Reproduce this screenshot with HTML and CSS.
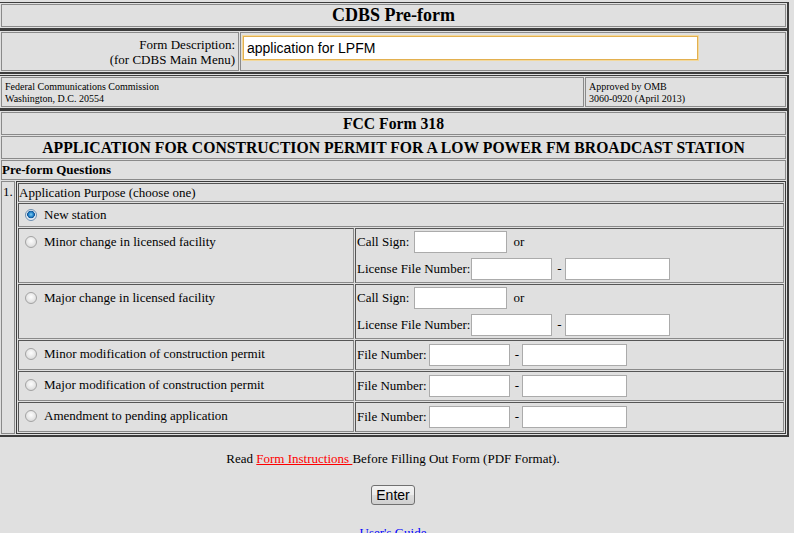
FILE: index.html
```html
<!DOCTYPE html>
<html lang="en">

<head>
  <meta charset="UTF-8">
  <title>CDBS Pre-form</title>
  <link rel="stylesheet" href="styles.css">
</head>

<body>
  <table class="box">
    <tr>
      <td class="title">CDBS Pre-form</td>
    </tr>
  </table>

  <table class="box">
    <tr>
      <td class="desc-label">Form Description:<br>(for CDBS Main Menu)</td>
      <td class="desc-field"><input class="desc-input" type="text" value="application for LPFM"></td>
    </tr>
  </table>

  <table class="box agency">
    <tr>
      <td>Federal Communications Commission<br>Washington, D.C. 20554</td>
      <td class="omb">Approved by OMB<br>3060-0920 (April 2013)</td>
    </tr>
  </table>

  <table class="box">
    <tr>
      <td colspan="2" class="head">FCC Form 318</td>
    </tr>
    <tr>
      <td colspan="2" class="head">APPLICATION FOR CONSTRUCTION PERMIT FOR A LOW POWER FM BROADCAST STATION</td>
    </tr>
    <tr>
      <td colspan="2" class="section">Pre-form Questions</td>
    </tr>
    <tr>
      <td class="num">1.</td>
      <td class="nest">
        <table class="inner">
          <tr>
            <td colspan="2" class="purpose">Application Purpose (choose one)</td>
          </tr>
          <tr>
            <td colspan="2" class="opt single"><label><input type="radio" name="purpose" checked> New station</label></td>
          </tr>
          <tr>
            <td class="opt"><label><input type="radio" name="purpose"> Minor change in licensed facility</label></td>
            <td class="fields">
              <div class="line">Call Sign:<input class="txt call" type="text"><span class="or">or</span></div>
              <div class="line">License File Number:<input class="txt fn1" type="text"><span class="dash">-</span><input class="txt fn2" type="text"></div>
            </td>
          </tr>
          <tr>
            <td class="opt"><label><input type="radio" name="purpose"> Major change in licensed facility</label></td>
            <td class="fields">
              <div class="line">Call Sign:<input class="txt call" type="text"><span class="or">or</span></div>
              <div class="line">License File Number:<input class="txt fn1" type="text"><span class="dash">-</span><input class="txt fn2" type="text"></div>
            </td>
          </tr>
          <tr>
            <td class="opt"><label><input type="radio" name="purpose"> Minor modification of construction permit</label></td>
            <td class="fields one">
              <div class="line">File Number:<input class="txt fn1 file" type="text"><span class="dash">-</span><input class="txt fn2" type="text"></div>
            </td>
          </tr>
          <tr>
            <td class="opt"><label><input type="radio" name="purpose"> Major modification of construction permit</label></td>
            <td class="fields one">
              <div class="line">File Number:<input class="txt fn1 file" type="text"><span class="dash">-</span><input class="txt fn2" type="text"></div>
            </td>
          </tr>
          <tr>
            <td class="opt"><label><input type="radio" name="purpose"> Amendment to pending application</label></td>
            <td class="fields one">
              <div class="line">File Number:<input class="txt fn1 file" type="text"><span class="dash">-</span><input class="txt fn2" type="text"></div>
            </td>
          </tr>
        </table>
      </td>
    </tr>
  </table>

  <div class="footer">
    <p class="read">Read <a class="instr" href="#">Form Instructions </a>Before Filling Out Form (PDF Format).</p>
    <p class="btn-row"><button class="enter" type="button">Enter</button></p>
    <p class="guide-row"><a class="guide" href="#">User's Guide</a></p>
  </div>
</body>

</html>
```

FILE: styles.css
```css
* {
  box-sizing: border-box;
}

body {
  margin: 0;
  padding-top: 2px;
  background-color: #e0e0e0;
  color: #000;
  font-family: "Liberation Serif", "Times New Roman", serif;
  font-size: 13px;
}

/* Boxed tables */
.box {
  width: 790px;
  margin-left: -1px;
  border: 1px solid #3c3c3c;
  border-right-width: 2px;
  border-bottom-width: 2px;
  border-spacing: 1px;
}

.box td {
  border: 1px solid #8a8a8a;
  padding: 0 2px;
}

.title {
  text-align: center;
  font-size: 18px;
  font-weight: bold;
  height: 23px;
}

.desc-label {
  width: 238px;
  text-align: right;
  line-height: 15px;
  padding: 4px 3px 3px 2px !important;
}

.desc-field {
  vertical-align: top;
  padding: 3px 4px 0 2px !important;
}

.desc-input {
  width: 455px;
  height: 24px;
  border: 1px solid #e3b04f;
  box-shadow: 0 0 0 1px #f2d89c;
  padding: 2px 3px;
  font-family: "Liberation Sans", Arial, sans-serif;
  font-size: 14px;
  outline: none;
}

.agency {
  margin-top: 1px;
}

.agency td {
  font-size: 10px;
  line-height: 12px;
  padding: 3px 3px 1px 3px;
}

.agency .omb {
  width: 201px;
}

.head {
  text-align: center;
  font-size: 15.7px;
  font-weight: bold;
  height: 23px;
}

.box .section {
  font-weight: bold;
  height: 20px;
  padding-left: 0;
}

.box .num {
  width: 14px;
  vertical-align: top;
  padding: 2px 0 2px 1px;
}

.box .nest {
  padding: 0;
  border: none;
}

/* Nested question table */
.inner {
  width: 100%;
  border: 1px solid #3c3c3c;
  border-spacing: 1px;
}

.inner td {
  border: 1px solid #555;
  border-right-color: #8a8a8a;
  border-bottom-color: #8a8a8a;
}

.box .purpose {
  height: 19px;
  padding-left: 0;
}

.opt {
  width: 336px;
  vertical-align: top;
  padding: 5px 3px !important;
}

.opt.single {
  padding: 3px 3px !important;
  height: 23px;
  vertical-align: middle;
}

.opt label {
  display: flex;
  align-items: center;
  gap: 7px;
}

.opt input[type="radio"] {
  appearance: none;
  width: 12px;
  height: 12px;
  margin: 0 0 0 3px;
  border-radius: 50%;
  border: 1px solid #a3a3a3;
  background: radial-gradient(circle at 50% 40%, #fdfdfd 0, #e6e6e6 55%, #cfcfcf 100%);
}

.opt input[type="radio"]:checked {
  border-color: #6d8fb0;
  background: radial-gradient(circle at 50% 45%, #7fd0f5 0, #1c7ac4 35%, #0e4f8c 48%, #dfe9f3 55%, #f6f8fa 100%);
}

.fields {
  display: flex;
  flex-direction: column;
  gap: 3px;
  padding: 1px 1px !important;
}

.fields.one {
  padding: 2px 1px !important;
}

.fields .line {
  display: flex;
  align-items: center;
  height: 24px;
}

.txt {
  height: 22px;
  border: 1px solid #ababab;
  background: #fff;
  font-family: "Liberation Sans", Arial, sans-serif;
  font-size: 13px;
  padding: 1px 2px;
}

.call {
  width: 93px;
  margin-left: 5px;
}

.or {
  margin-left: 6px;
}

.fn1 {
  width: 81px;
  margin-left: 1px;
}

.fn1.file {
  margin-left: 2px;
}

.fn2 {
  width: 105px;
}

.dash {
  margin: 0 3px 0 5px;
}

/* Footer */
.footer {
  width: 786px;
  text-align: center;
}

.footer p {
  margin: 0;
}

.read {
  padding-top: 14px;
}

.btn-row {
  padding-top: 18px;
}

.guide-row {
  padding-top: 20px;
}

.instr {
  color: #ff0000;
}

.guide {
  color: #0000ff;
}

.enter {
  font-family: "Liberation Sans", Arial, sans-serif;
  font-size: 14px;
  padding: 0 4px;
  height: 20px;
  border: 1px solid #707070;
  border-radius: 3px;
  background: linear-gradient(#f2f2f2, #ebebeb 50%, #dddddd 50%, #cfcfcf);
}
```
